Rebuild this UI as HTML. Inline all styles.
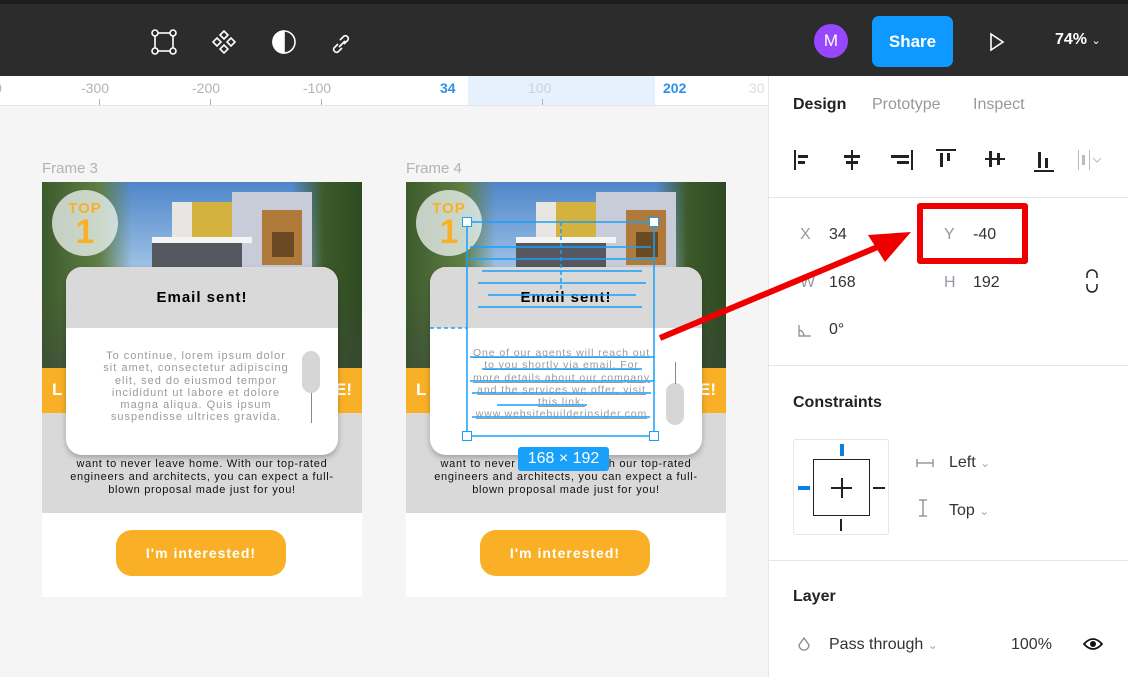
<!DOCTYPE html>
<html><head><meta charset="utf-8"><style>
*{box-sizing:border-box;margin:0;padding:0}
body{width:1128px;height:677px;overflow:hidden;background:#f5f5f5;font-family:"Liberation Sans",sans-serif;position:relative}
.abs{position:absolute}
.top{left:0;top:0;width:1128px;height:76px;background:#2c2c2c;border-top:4px solid #1e1e1e}
.ruler{left:0;top:76px;width:768px;height:30px;background:#fff;border-bottom:1px solid #e6e6e6}
.rl{position:absolute;top:4px;font-size:14px;color:#b3b3b3}
.tick{position:absolute;top:23px;width:1px;height:6px;background:#b3b3b3}
.panel{left:768px;top:76px;width:360px;height:601px;background:#fff;border-left:1px solid #e6e6e6}
.flabel{font-size:15px;color:#b3b3b3}
.frame{width:320px;height:415px;background:#fff;overflow:hidden}
.img{left:0;top:0;width:320px;height:186px;background:
 linear-gradient(180deg,rgba(0,0,0,0) 60%,rgba(60,70,60,.5) 100%),
 linear-gradient(90deg,#3d5a2c 0,#5f7f45 18%,rgba(0,0,0,0) 28%,rgba(0,0,0,0) 78%,#3c5a2a 88%,#2f4a22 100%),
 linear-gradient(180deg,#4f86c9 0,#9dc0e5 45%,#7e8f86 100%)}
.house{left:90px;top:0px;width:190px;height:100px}
.band{left:0;top:186px;width:320px;height:45px;background:#f9b026;color:#fff;font-weight:bold;font-size:17px}
.grey{left:0;top:231px;width:320px;height:100px;background:#d9d9d9}
.para{left:0;top:276px;width:320px;text-align:center;font-size:11px;letter-spacing:.7px;line-height:12.8px;color:#111}
.btn{left:74px;top:348px;width:170px;height:46px;border-radius:16px;background:#f9b026;color:#fff;font-weight:bold;font-size:14px;letter-spacing:1px;text-align:center;line-height:46px}
.badge{left:10px;top:8px;width:66px;height:66px;border-radius:50%;background:rgba(240,245,245,.75);text-align:center;color:#f9b026;font-weight:bold}
.pop{width:272px;height:188px;border-radius:16px;background:#fff;overflow:hidden;box-shadow:0 3px 6px rgba(0,0,0,.25)}
.ph{left:0;top:0;width:272px;height:61px;background:#d9d9d9;text-align:center;font-weight:bold;font-size:15px;letter-spacing:1px;line-height:62px;color:#000}
.pt{font-size:10.5px;letter-spacing:1px;line-height:12.3px;color:#9a9a9a;text-align:center;white-space:nowrap}
.hd{width:10px;height:10px;background:#fff;border:1.5px solid #18a0fb}
.pl{font-size:16px;color:#333}
.lab{font-size:16px;color:#999}
</style></head><body>

<div class="abs top">
 <svg class="abs" style="left:150px;top:24px" width="220" height="32" viewBox="0 0 220 32" fill="none" stroke="#fff" stroke-width="1.6">
  <rect x="5" y="5" width="18" height="18"/><circle cx="5" cy="5" r="3" fill="#2c2c2c"/><circle cx="23" cy="5" r="3" fill="#2c2c2c"/><circle cx="5" cy="23" r="3" fill="#2c2c2c"/><circle cx="23" cy="23" r="3" fill="#2c2c2c"/>
  <path d="M74 3l4 4-4 4-4-4zM74 17l4 4-4 4-4-4zM67 10l4 4-4 4-4-4zM81 10l4 4-4 4-4-4z"/>
  <circle cx="134" cy="14" r="11"/><path d="M134 3a11 11 0 0 0 0 22z" fill="#fff"/>
  <path d="M190 12l4-4a3 3 0 0 1 4 4l-4 4M188 16l-4 4a3 3 0 0 0 4 4l4-4M189 19l6-6"/>
 </svg>
 <div class="abs" style="left:814px;top:20px;width:34px;height:34px;border-radius:50%;background:#9747ff;color:#fff;text-align:center;line-height:34px;font-size:17px">M</div>
 <div class="abs" style="left:872px;top:12px;width:81px;height:51px;border-radius:7px;background:#0d99ff;color:#fff;text-align:center;line-height:51px;font-size:17px;font-weight:bold">Share</div>
 <svg class="abs" style="left:988px;top:27px" width="18" height="22"><path d="M3 3l12 8-12 8z" fill="none" stroke="#fff" stroke-width="1.6"/></svg>
 <div class="abs" style="left:1055px;top:27px;color:#fff;font-size:16px;font-weight:bold">74% <span style="font-size:11px;font-weight:normal">&#8964;</span></div>
</div>

<div class="abs ruler">
 <div class="abs" style="left:468px;top:0;width:187px;height:29px;background:#e5f2fd"></div>
 <span class="rl" style="left:-6px">0</span>
 <span class="rl" style="left:81px">-300</span><div class="tick" style="left:99px"></div>
 <span class="rl" style="left:192px">-200</span><div class="tick" style="left:210px"></div>
 <span class="rl" style="left:303px">-100</span><div class="tick" style="left:321px"></div>
 <span class="rl" style="left:440px;color:#2f8fe8;font-weight:bold">34</span>
 <span class="rl" style="left:528px;color:#c6d3de">100</span><div class="tick" style="left:542px"></div>
 <span class="rl" style="left:663px;color:#2f8fe8;font-weight:bold">202</span>
 <span class="rl" style="left:749px;color:#ddd">30</span>
</div>

<div class="abs flabel" style="left:42px;top:160px">Frame 3</div>
<div class="abs flabel" style="left:406px;top:160px">Frame 4</div>

<!-- Frame 3 -->
<div class="abs frame" style="left:42px;top:182px">
 <div class="abs img"></div>
 <svg class="abs house" viewBox="0 0 190 100"><rect x="40" y="20" width="60" height="80" fill="#e8e6e2"/><rect x="60" y="20" width="40" height="40" fill="#d3b23f"/><rect x="100" y="10" width="80" height="90" fill="#c8cbd8"/><rect x="130" y="28" width="40" height="55" fill="#b07a3a"/><rect x="140" y="50" width="22" height="25" fill="#6a4a22"/><rect x="20" y="60" width="90" height="40" fill="#55585e"/><rect x="20" y="55" width="100" height="6" fill="#f4f4f4"/></svg>
 <div class="abs badge"><div style="font-size:15px;margin-top:10px;letter-spacing:1px">TOP</div><div style="font-size:34px;line-height:30px">1</div></div>
 <div class="abs band"><span class="abs" style="left:10px;top:12px">L</span><span class="abs" style="right:10px;top:12px">E!</span></div>
 <div class="abs grey"></div>
 <div class="abs para">want to never leave home. With our top-rated<br>engineers and architects, you can expect a full-<br>blown proposal made just for you!</div>
 <div class="abs btn">I'm interested!</div>
</div>
<div class="abs pop" style="left:66px;top:267px">
 <div class="abs ph">Email sent!</div>
 <div class="abs pt" style="left:0;top:83px;width:260px;font-size:11px">To continue, lorem ipsum dolor<br>sit amet, consectetur adipiscing<br>elit, sed do eiusmod tempor<br>incididunt ut labore et dolore<br>magna aliqua. Quis ipsum<br>suspendisse ultrices gravida.</div>
 <div class="abs" style="left:236px;top:84px;width:18px;height:42px;border-radius:9px;background:#d6d6d6"></div>
 <div class="abs" style="left:245px;top:126px;width:1px;height:30px;background:#888"></div>
</div>

<!-- Frame 4 -->
<div class="abs frame" style="left:406px;top:182px">
 <div class="abs img"></div>
 <svg class="abs house" viewBox="0 0 190 100"><rect x="40" y="20" width="60" height="80" fill="#e8e6e2"/><rect x="60" y="20" width="40" height="40" fill="#d3b23f"/><rect x="100" y="10" width="80" height="90" fill="#c8cbd8"/><rect x="130" y="28" width="40" height="55" fill="#b07a3a"/><rect x="140" y="50" width="22" height="25" fill="#6a4a22"/><rect x="20" y="60" width="90" height="40" fill="#55585e"/><rect x="20" y="55" width="100" height="6" fill="#f4f4f4"/></svg>
 <div class="abs badge"><div style="font-size:15px;margin-top:10px;letter-spacing:1px">TOP</div><div style="font-size:34px;line-height:30px">1</div></div>
 <div class="abs band"><span class="abs" style="left:10px;top:12px">L</span><span class="abs" style="right:10px;top:12px">E!</span></div>
 <div class="abs grey"></div>
 <div class="abs para">want to never leave home. With our top-rated<br>engineers and architects, you can expect a full-<br>blown proposal made just for you!</div>
 <div class="abs btn">I'm interested!</div>
</div>
<div class="abs pop" style="left:430px;top:267px">
 <div class="abs ph">Email sent!</div>
 <div class="abs pt" style="left:40px;top:80px;width:183px;text-decoration:underline;letter-spacing:.9px">One of our agents will reach out<br>to you shortly via email. For<br>more details about our company<br>and the services we offer, visit<br>this link:<br>www.websitebuilderinsider.com</div>
 <div class="abs" style="left:236px;top:116px;width:18px;height:42px;border-radius:9px;background:#d6d6d6"></div>
 <div class="abs" style="left:245px;top:95px;width:1px;height:22px;background:#888"></div>
</div>
<!-- selection -->
<svg class="abs" style="left:0;top:0" width="768" height="677" fill="none" stroke="#18a0fb" stroke-width="1.5">
 <rect x="467" y="222" width="187" height="214"/>
 <path d="M470 247H651M470 259H654M482 271H642M478 283H646M488 295H636M478 307H642M470 357H654M482 369H642M470 381H654M472 393H651M497 405H587M472 417H650"/>
 <path d="M430 328H467M561 222V290" stroke-dasharray="4 3"/>
</svg>
<div class="abs hd" style="left:462px;top:217px"></div><div class="abs hd" style="left:649px;top:217px"></div>
<div class="abs hd" style="left:462px;top:431px"></div><div class="abs hd" style="left:649px;top:431px"></div>
<div class="abs" style="left:518px;top:447px;width:91px;height:24px;border-radius:3px;background:#18a0fb;color:#fff;font-size:16px;text-align:center;line-height:24px">168 × 192</div>

<!-- panel -->
<div class="abs panel">
 <div class="abs" style="left:24px;top:20px;font-size:16px;font-weight:bold;color:#222">Design</div>
 <div class="abs" style="left:103px;top:20px;font-size:16px;color:#999">Prototype</div>
 <div class="abs" style="left:204px;top:20px;font-size:16px;color:#999">Inspect</div>
 <svg class="abs" style="left:20px;top:70px" width="330" height="30" fill="#222">
  <rect x="5" y="4" width="2" height="20"/><rect x="9" y="9" width="10" height="3"/><rect x="9" y="15" width="7" height="3"/>
  <rect x="62" y="4" width="2" height="20"/><rect x="55" y="9" width="16" height="3"/><rect x="57" y="15" width="12" height="3"/>
  <rect x="122" y="4" width="2" height="20"/><rect x="102" y="9" width="18" height="3"/><rect x="108" y="15" width="12" height="3"/>
  <rect x="147" y="3" width="20" height="2"/><rect x="151" y="7" width="3" height="14"/><rect x="158" y="7" width="3" height="8"/>
  <rect x="196" y="12" width="20" height="2"/><rect x="200" y="5" width="3" height="16"/><rect x="208" y="7" width="3" height="12"/>
  <rect x="245" y="24" width="20" height="2"/><rect x="249" y="6" width="3" height="16"/><rect x="256" y="12" width="3" height="10"/>
  <g fill="#bbb"><rect x="289" y="4" width="1" height="20"/><rect x="293" y="9" width="3" height="10"/><rect x="300" y="4" width="1" height="20"/></g>
  <path d="M304 12l4 4 4-4" stroke="#bbb" fill="none"/>
 </svg>
 <div class="abs" style="left:0;top:121px;width:360px;height:1px;background:#e6e6e6"></div>
 <div class="abs lab" style="left:31px;top:150px">X</div><div class="abs pl" style="left:60px;top:150px">34</div>
 <div class="abs lab" style="left:175px;top:150px">Y</div><div class="abs pl" style="left:204px;top:150px">-40</div>
 <div class="abs lab" style="left:31px;top:198px">W</div><div class="abs pl" style="left:60px;top:198px">168</div>
 <div class="abs lab" style="left:175px;top:198px;color:#99a">H</div><div class="abs pl" style="left:204px;top:198px">192</div>
 <svg class="abs" style="left:316px;top:193px" width="14" height="24" fill="none" stroke="#222" stroke-width="1.5"><path d="M2 9V6a5 5 0 0 1 10 0v3M2 15v3a5 5 0 0 0 10 0v-3"/></svg>
 <svg class="abs" style="left:29px;top:248px" width="14" height="14" fill="none" stroke="#888" stroke-width="1.2"><path d="M1 1V12H13M1 6a6 6 0 0 1 5 6"/></svg>
 <div class="abs pl" style="left:60px;top:245px">0°</div>
 <div class="abs" style="left:0;top:289px;width:360px;height:1px;background:#e6e6e6"></div>
 <div class="abs" style="left:24px;top:318px;font-size:16px;font-weight:bold;color:#222">Constraints</div>
 <div class="abs" style="left:24px;top:363px;width:96px;height:96px;border:1px solid #e6e6e6;border-radius:3px"></div>
 <div class="abs" style="left:44px;top:383px;width:57px;height:57px;border:1.5px solid #222"></div>
 <div class="abs" style="left:72px;top:402px;width:1.5px;height:20px;background:#222"></div>
 <div class="abs" style="left:62px;top:411px;width:21px;height:1.5px;background:#222"></div>
 <div class="abs" style="left:71px;top:368px;width:4px;height:12px;background:#0d7fe0"></div>
 <div class="abs" style="left:29px;top:410px;width:12px;height:4px;background:#0d7fe0"></div>
 <div class="abs" style="left:104px;top:411px;width:12px;height:2px;background:#222"></div>
 <div class="abs" style="left:71px;top:443px;width:2px;height:12px;background:#222"></div>
 <svg class="abs" style="left:146px;top:381px" width="20" height="60" fill="none" stroke="#888" stroke-width="1.3"><path d="M2 2v8M18 2v8M2 6H18M4 43H12M4 59H12M8 43V59"/></svg>
 <div class="abs pl" style="left:180px;top:378px">Left <span style="color:#aaa;font-size:12px">&#8964;</span></div>
 <div class="abs pl" style="left:180px;top:426px">Top <span style="color:#aaa;font-size:12px">&#8964;</span></div>
 <div class="abs" style="left:0;top:484px;width:360px;height:1px;background:#e6e6e6"></div>
 <div class="abs" style="left:24px;top:512px;font-size:16px;font-weight:bold;color:#222">Layer</div>
 <svg class="abs" style="left:28px;top:561px" width="14" height="16" fill="none" stroke="#888" stroke-width="1.3"><path d="M7 1L2 8a5 5 0 1 0 10 0z"/></svg>
 <div class="abs pl" style="left:60px;top:560px">Pass through <span style="color:#aaa;font-size:12px">&#8964;</span></div>
 <div class="abs pl" style="left:242px;top:560px">100%</div>
 <svg class="abs" style="left:314px;top:561px" width="20" height="14"><path d="M1 7Q10 -3 19 7Q10 17 1 7z" fill="none" stroke="#111" stroke-width="1.8"/><circle cx="10" cy="7" r="3" fill="#111"/></svg>
</div>

<!-- red annotation -->
<div class="abs" style="left:917px;top:203px;width:111px;height:61px;border:6px solid #e00;border-radius:3px"></div>
<svg class="abs" style="left:0;top:0" width="1128" height="677">
 <path d="M660 338L880 246" stroke="#e00" stroke-width="6"/>
 <path d="M911 232L868 235L885 262z" fill="#e00"/>
</svg>
</body></html>
